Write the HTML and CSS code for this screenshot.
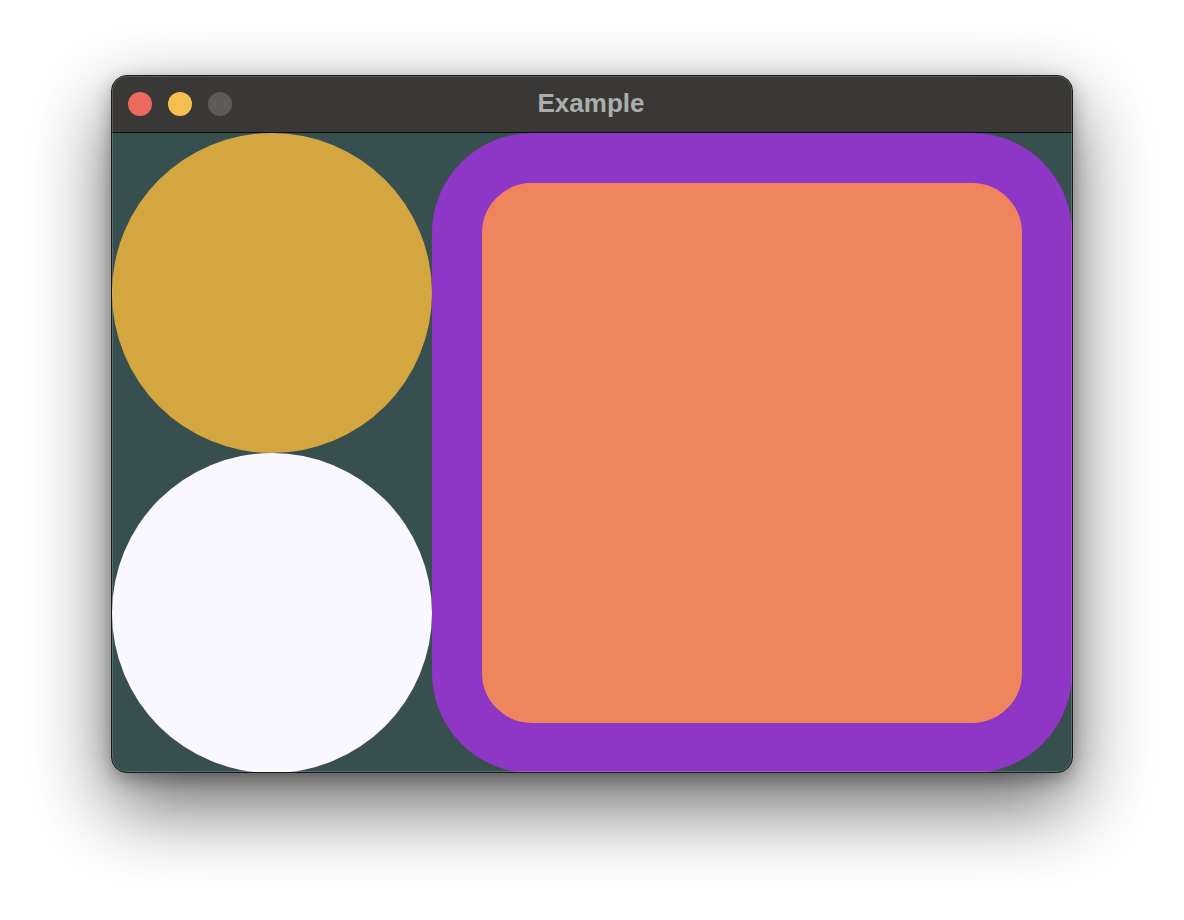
FILE: index.html
```html
<!DOCTYPE html>
<html>
<head>
<meta charset="utf-8">
<title>Example</title>
<link rel="stylesheet" href="styles.css">
</head>
<body>
  <div class="window">
    <div class="titlebar">
      <div class="lights">
        <span class="light close"></span>
        <span class="light minimize"></span>
        <span class="light zoom"></span>
      </div>
      <div class="title">Example</div>
    </div>
    <div class="content">
      <div class="column">
        <div class="circle gold"></div>
        <div class="circle white"></div>
      </div>
      <div class="frame"></div>
    </div>
  </div>
</body>
</html>
```
FILE: styles.css
```css
html, body {
  margin: 0;
  padding: 0;
  background: #ffffff;
  width: 1184px;
  height: 920px;
  overflow: hidden;
}

body {
  display: flex;
  align-items: flex-start;
  padding: 75px 0 0 111px;
  box-sizing: border-box;
}

.window {
  position: relative;
  width: 960px;
  border: 1px solid #1a1a1a;
  border-radius: 16px;
  overflow: hidden;
  background: #384f50;
  box-shadow: 0 32px 80px rgba(0, 0, 0, 0.6), 0 6px 18px rgba(0, 0, 0, 0.3);
}

.window::after {
  content: "";
  position: absolute;
  inset: 0;
  border-radius: 15px;
  box-shadow: inset 0 0 0 1px rgba(255, 255, 255, 0.18);
  pointer-events: none;
}

.titlebar {
  position: relative;
  height: 56px;
  background: #3a3836;
  border-bottom: 1px solid #0c0c0c;
  display: flex;
  align-items: center;
  justify-content: center;
}

.lights {
  position: absolute;
  left: 16px;
  top: 16px;
  display: flex;
  gap: 16px;
}

.light {
  width: 24px;
  height: 24px;
  border-radius: 50%;
  display: block;
}

.close { background: #ed6a5e; }
.minimize { background: #f5bf4f; }
.zoom { background: #5c5b5a; }

.title {
  font-family: "Liberation Sans", Arial, sans-serif;
  font-weight: bold;
  font-size: 26px;
  color: #adadad;
  line-height: 1;
  margin-left: -2px;
  margin-top: -2px;
}

.content {
  display: flex;
  height: 639px;
}

.column {
  display: flex;
  flex-direction: column;
  width: 320px;
}

.circle {
  flex: none;
  width: 320px;
  height: 320px;
  border-radius: 50%;
}

.gold { background: #d3a640; }
.white { background: #f8f8fe; }

.frame {
  flex: none;
  width: 640px;
  height: 640px;
  box-sizing: border-box;
  border: 50px solid #8e37c7;
  border-radius: 100px;
  background: #ee855c;
}
```
